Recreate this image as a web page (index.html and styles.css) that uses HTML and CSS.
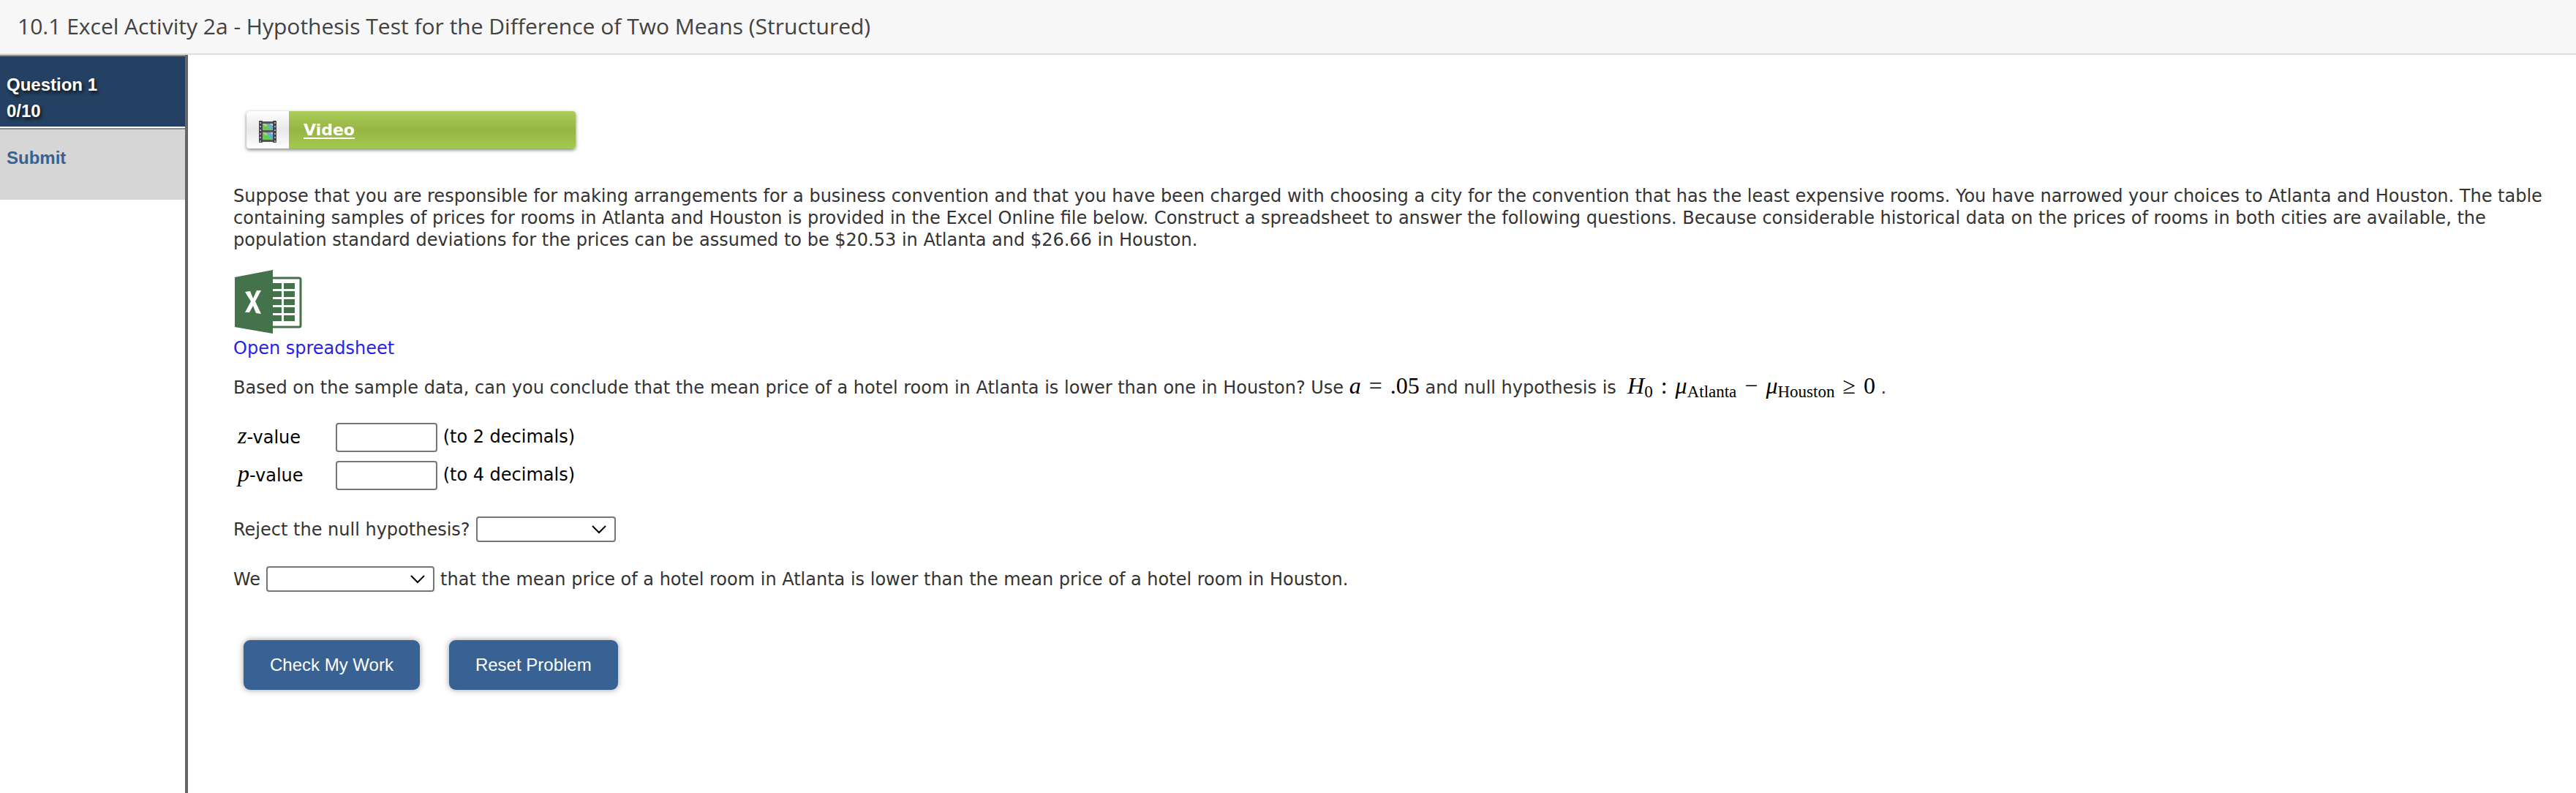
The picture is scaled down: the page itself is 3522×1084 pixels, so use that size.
FILE: index.html
```html
<!DOCTYPE html>
<html lang="en">

<head>
    <meta charset="UTF-8">
    <meta name="viewport" content="width=device-width, initial-scale=1.0">
    <title>10.1 Excel Activity 2a</title>
    <link rel="stylesheet" href="styles.css">
</head>

<body>

    <header class="header">
        <h1>10.1 Excel Activity 2a - Hypothesis Test for the Difference of Two Means (Structured)</h1>
    </header>

    <div class="layout">
        <nav class="sidebar">
            <a href="#question" class="nav-item active">Question 1<br>0/10</a>
            <a href="#submit" class="nav-item">Submit</a>
        </nav>

        <main class="content" id="question">
            <div class="video">
                <span class="video-icon">
                    <svg width="24" height="30" viewBox="0 0 24 30">
                        <rect x="2" y="1" width="20" height="28" fill="#55555c"/>
                        <rect width="5" height="30" rx="1" fill="#4a454c"/>
                        <rect x="19" width="5" height="30" rx="1" fill="#4a454c"/>
                        <path d="M5 4h14v9H5z" fill="#62aee8"/>
                        <path d="M5 4l6 2 8 7H5z" fill="#6cc654"/>
                        <path d="M5 4h4l3 3-3 1z" fill="#b8dc50"/>
                        <path d="M15 4h4v3z" fill="#e8d890"/>
                        <path d="M5 16h14v10H5z" fill="#62aee8"/>
                        <path d="M5 16l6 2 8 8H5z" fill="#6cc654"/>
                        <path d="M5 16h4l3 3-3 1z" fill="#b8dc50"/>
                        <path d="M15 16h4v3z" fill="#e8d890"/>
                        <path d="M2 2v27M22 2v27" stroke="#a8a4ac" stroke-width="2" stroke-dasharray="2 3"/>
                    </svg>
                </span>
                <a href="#video" class="video-link">Video</a>
            </div>

            <p class="intro">Suppose that you are responsible for making arrangements for a business convention and that you have been charged with choosing a city for the convention that has the least expensive rooms. You have narrowed your choices to Atlanta and Houston. The table containing samples of prices for rooms in Atlanta and Houston is provided in the Excel Online file below. Construct a spreadsheet to answer the following questions. Because considerable historical data on the prices of rooms in both cities are available, the population standard deviations for the prices can be assumed to be $20.53 in Atlanta and $26.66 in Houston.</p>

            <a href="#spreadsheet" class="spreadsheet">
                <svg width="94" height="88" viewBox="0 0 94 88">
                    <rect x="40" y="11" width="52" height="67" rx="2" fill="#fff" stroke="#44734b" stroke-width="3"/>
                    <path d="M53 18h13v8H53zM69 18h15v8H69zM53 29h13v8H53zM69 29h15v8H69zM53 40h13v8H53zM69 40h15v8H69zM53 51h13v8H53zM69 51h15v8H69zM53 62h13v8H53zM69 62h15v8H69z" fill="#44734b"/>
                    <path d="M2 10L54 0v87L2 78z" fill="#44734b"/>
                    <path d="M16 30l7-1 4 10 5-11 6 0-8 15 8 17-7-1-4-10-5 9-6 0 8-15z" fill="#fff"/>
                </svg>
                <span>Open spreadsheet</span>
            </a>

            <p class="hypothesis">Based on the sample data, can you conclude that the mean price of a hotel room in Atlanta is lower than one in Houston? Use <span class="math"><i>a</i><span class="op">=</span>.05</span> and null hypothesis is &nbsp;<span class="math"><i>H</i><sub>0</sub><span class="op">:</span><i>μ</i><sub>Atlanta</sub><span class="op">−</span><i>μ</i><sub>Houston</sub><span class="op">≥</span>0</span> .</p>

            <table class="values">
                <tr>
                    <td><label for="zvalue"><i class="math">z</i>-value</label></td>
                    <td><input type="text" id="zvalue"> (to 2 decimals)</td>
                </tr>
                <tr>
                    <td><label for="pvalue"><i class="math">p</i>-value</label></td>
                    <td><input type="text" id="pvalue"> (to 4 decimals)</td>
                </tr>
            </table>

            <div class="line">
                <label for="reject">Reject the null hypothesis?</label>
                <span class="select">
                    <select id="reject" class="short">
                        <option></option>
                        <option>Yes</option>
                        <option>No</option>
                    </select>
                    <svg width="20" height="12" viewBox="0 0 20 12"><path d="M1 1l9 9 9-9" fill="none" stroke="#000" stroke-width="2"/></svg>
                </span>
            </div>

            <div class="line">
                <label for="conclude">We</label>
                <span class="select">
                    <select id="conclude" class="long">
                        <option></option>
                        <option>can conclude</option>
                        <option>cannot conclude</option>
                    </select>
                    <svg width="20" height="12" viewBox="0 0 20 12"><path d="M1 1l9 9 9-9" fill="none" stroke="#000" stroke-width="2"/></svg>
                </span>
                <span>that the mean price of a hotel room in Atlanta is lower than the mean price of a hotel room in Houston.</span>
            </div>

            <div class="buttons">
                <button type="button">Check My Work</button>
                <button type="button">Reset Problem</button>
            </div>
        </main>
    </div>

</body>

</html>
```
FILE: styles.css
```css
* {
    box-sizing: border-box;
}

body {
    margin: 0;
    min-height: 100vh;
    display: flex;
    flex-direction: column;
    background-color: #fff;
    color: #333;
    font-family: Verdana, "DejaVu Sans", sans-serif;
    font-size: 24px;
    line-height: 30px;
}

.header {
    padding: 15px 24px 17px;
    background-color: #f7f7f7;
    border-bottom: 2px solid #ddd;
}

h1 {
    margin: 0;
    color: #424242;
    font-family: "Open Sans", sans-serif;
    font-size: 30px;
    font-weight: normal;
    line-height: 41px;
}

.layout {
    flex: 1;
    display: flex;
}

.sidebar {
    width: 257px;
    flex-shrink: 0;
    border-right: 4px solid #666;
}

.nav-item {
    display: block;
    height: 98px;
    padding: 21px 9px;
    border-top: 2px solid #8c8c8c;
    background-color: #d6d6d6;
    color: #386194;
    font-family: Arial, "Liberation Sans", sans-serif;
    font-weight: bold;
    line-height: 36px;
    text-decoration: none;
}

.nav-item.active {
    margin-bottom: 2px;
    background-color: #244163;
    color: #fff;
    text-shadow: 2px 3px 4px #111;
}

.content {
    flex: 1;
    padding: 77px 24px 24px 62px;
}

.video {
    display: flex;
    width: 450px;
    height: 51px;
    margin-left: 18px;
    border-radius: 4px;
    box-shadow: 0 2px 5px rgba(0, 0, 0, 0.5);
    background: linear-gradient(#abcd59, #97b544 50%, #a4c950);
    overflow: hidden;
}

.video-icon {
    display: flex;
    align-items: center;
    justify-content: center;
    width: 58px;
    padding-top: 5px;
    background: linear-gradient(#fff, #e8e8e8 50%, #fff);
}

.video-link {
    padding: 11px 20px;
    color: #fff;
    font-size: 22px;
    font-weight: bold;
    text-underline-offset: 3px;
}

p {
    margin: 0;
}

.intro {
    margin-top: 50px;
}

.spreadsheet {
    display: flex;
    flex-direction: column;
    width: fit-content;
    margin-top: 26px;
    gap: 4px;
    color: #2a1fe8;
    text-decoration: none;
}

.hypothesis {
    margin-top: 24px;
}

.math {
    color: #000;
    font-family: "Liberation Serif", serif;
    font-size: 32px;
    line-height: 20px;
}

.op {
    margin: 0 11px;
}

sub {
    font-size: 23px;
    line-height: 0;
    vertical-align: -5px;
}

.values {
    margin: 27px 0 30px 4px;
    border-spacing: 2px 0;
    color: #000;
}

.values td {
    height: 52px;
    padding: 0;
    vertical-align: middle;
}

.values td:first-child {
    width: 132px;
}

input {
    width: 139px;
    height: 40px;
    border: 2px solid #767676;
    border-radius: 4px;
    font-size: 24px;
    vertical-align: middle;
}

.line {
    display: flex;
    align-items: center;
    gap: 8px;
    margin-bottom: 33px;
}

.select {
    position: relative;
    display: flex;
}

select {
    appearance: none;
    height: 35px;
    border: 2px solid #767676;
    border-radius: 4px;
    background-color: #fff;
    font-size: 20px;
}

.short {
    width: 191px;
}

.long {
    width: 230px;
}

/* arrow drawn over the select */
.select svg {
    position: absolute;
    right: 13px;
    top: 12px;
    pointer-events: none;
}

.buttons {
    display: flex;
    gap: 40px;
    margin: 66px 14px 0;
}

button {
    height: 68px;
    padding: 0 36px;
    border: none;
    border-radius: 9px;
    background-color: #386194;
    box-shadow: 0 0 8px rgba(0, 0, 0, 0.4);
    color: #fff;
    font-family: Arial, "Liberation Sans", sans-serif;
    font-size: 24px;
    cursor: pointer;
}
```
